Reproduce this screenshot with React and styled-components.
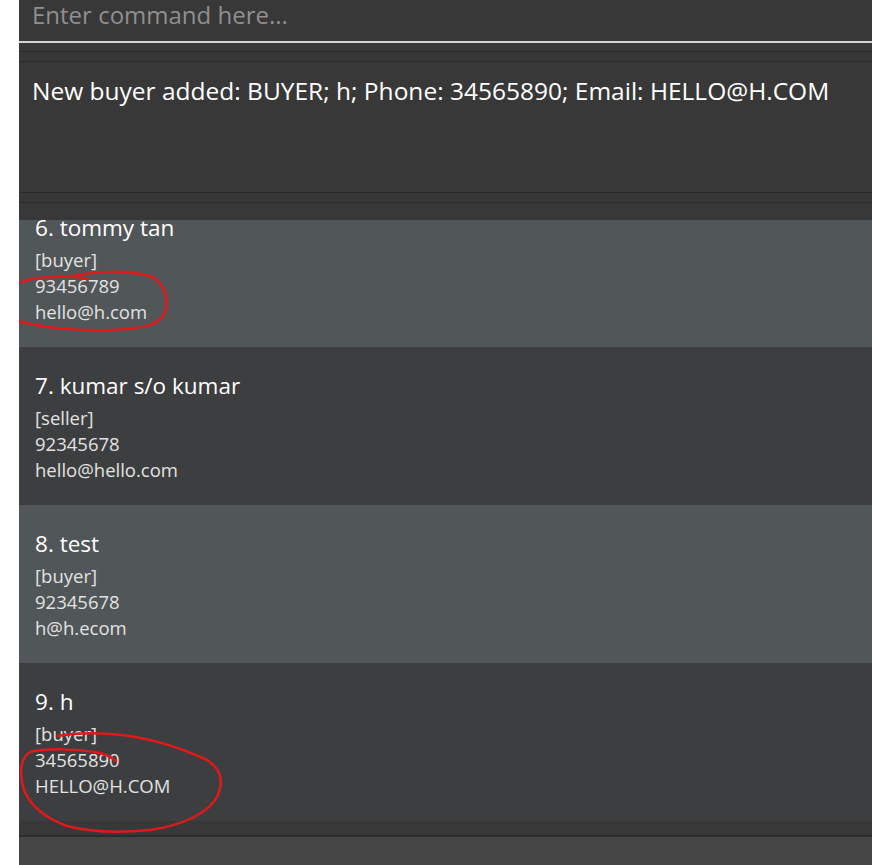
import React from "react";
import styled, { createGlobalStyle } from "styled-components";

const Global = createGlobalStyle`
  html, body { margin: 0; padding: 0; background: #ffffff; }
  body { font-family: "Open Sans", "Noto Sans", sans-serif; }
  * { box-sizing: border-box; }
`;

const Window = styled.div`
  position: relative;
  margin-left: 19px;
  width: 853px;
  height: 865px;
  background: #383838;
  display: flex;
  flex-direction: column;
  overflow: hidden;
`;

const CommandBox = styled.div`
  height: 43px;
  flex: none;
  background: #383838;
  border-bottom: 2px solid #d4d4d4;
  display: flex;
  align-items: flex-start;
  padding-left: 13px;
`;

const Placeholder = styled.span`
  font-size: 24px;
  line-height: 30px;
  color: #8f8f8f;
`;

const Divider = styled.div`
  height: 1px;
  flex: none;
  background: #2b2b2b;
  margin-top: ${(p) => p.$gap}px;
`;

const ResultArea = styled.div`
  height: 130px;
  flex: none;
  padding: 14px 13px 0;
  background: #383838;
`;

const ResultText = styled.div`
  font-size: 24.5px;
  line-height: 30px;
  color: #ffffff;
  white-space: nowrap;
`;

const ListViewport = styled.div`
  margin-top: 17px;
  height: 601px;
  flex: none;
  overflow: hidden;
`;

const ListInner = styled.div`
  margin-top: -31px;
  display: flex;
  flex-direction: column;
`;

const Card = styled.div`
  height: 158px;
  padding: 25px 16px 0;
  background: ${(p) => (p.$alt ? "#515658" : "#3c3e3f")};
  display: flex;
  flex-direction: column;
`;

const CardTitle = styled.div`
  font-size: 22.5px;
  line-height: 28px;
  color: #ffffff;
  margin-bottom: 5px;
`;

const CardLine = styled.div`
  font-size: 18.5px;
  line-height: 26px;
  color: #e2e2e2;
`;

const BottomBand = styled.div`
  height: 16px;
  flex: none;
  background: #383838;
  border-bottom: 2px solid #2b2b2b;
`;

const StatusBar = styled.div`
  flex: 1;
  background: #464646;
`;

const Scribble = styled.svg`
  position: absolute;
  left: -19px;
  top: 0;
  width: 872px;
  height: 865px;
  pointer-events: none;
`;

const persons = [
  { idx: 6, name: "tommy tan", tag: "buyer", phone: "93456789", email: "hello@h.com" },
  { idx: 7, name: "kumar s/o kumar", tag: "seller", phone: "92345678", email: "hello@hello.com" },
  { idx: 8, name: "test", tag: "buyer", phone: "92345678", email: "h@h.ecom" },
  { idx: 9, name: "h", tag: "buyer", phone: "34565890", email: "HELLO@H.COM" },
];

export default function App() {
  return (
    <>
      <Global />
      <Window>
        <CommandBox>
          <Placeholder>Enter command here...</Placeholder>
        </CommandBox>
        <Divider $gap={8} />
        <Divider $gap={9} />
        <ResultArea>
          <ResultText>
            New buyer added: BUYER; h; Phone: 34565890; Email: HELLO@H.COM
          </ResultText>
        </ResultArea>
        <Divider $gap={0} />
        <Divider $gap={9} />
        <ListViewport>
          <ListInner>
            {persons.map((p, i) => (
              <Card key={p.idx} $alt={i % 2 === 0}>
                <CardTitle>
                  {p.idx}. {p.name}
                </CardTitle>
                <CardLine>[{p.tag}]</CardLine>
                <CardLine>{p.phone}</CardLine>
                <CardLine>{p.email}</CardLine>
              </Card>
            ))}
          </ListInner>
        </ListViewport>
        <BottomBand />
        <StatusBar />
        <Scribble viewBox="0 0 872 865">
          <path
            d="M72 276 C95 271 125 270 150 276 C165 282 169 300 165 312 C160 326 140 329 110 330 C80 331 45 328 22 322 C8 318 3 305 6 295 C10 283 30 278 50 277 C65 276 80 277 88 279"
            fill="none"
            stroke="#e0191b"
            strokeWidth="2.5"
            strokeLinecap="round"
          />
          <path
            d="M58 736 C75 733 95 733 110 734 C140 736 175 745 207 760 C220 768 224 780 218 795 C210 812 185 825 150 830 C120 833 90 832 67 826 C45 818 30 805 24 790 C19 775 20 758 30 752 C45 748 75 749 95 752 C105 754 112 757 116 761"
            fill="none"
            stroke="#e0191b"
            strokeWidth="2.5"
            strokeLinecap="round"
          />
        </Scribble>
      </Window>
    </>
  );
}
